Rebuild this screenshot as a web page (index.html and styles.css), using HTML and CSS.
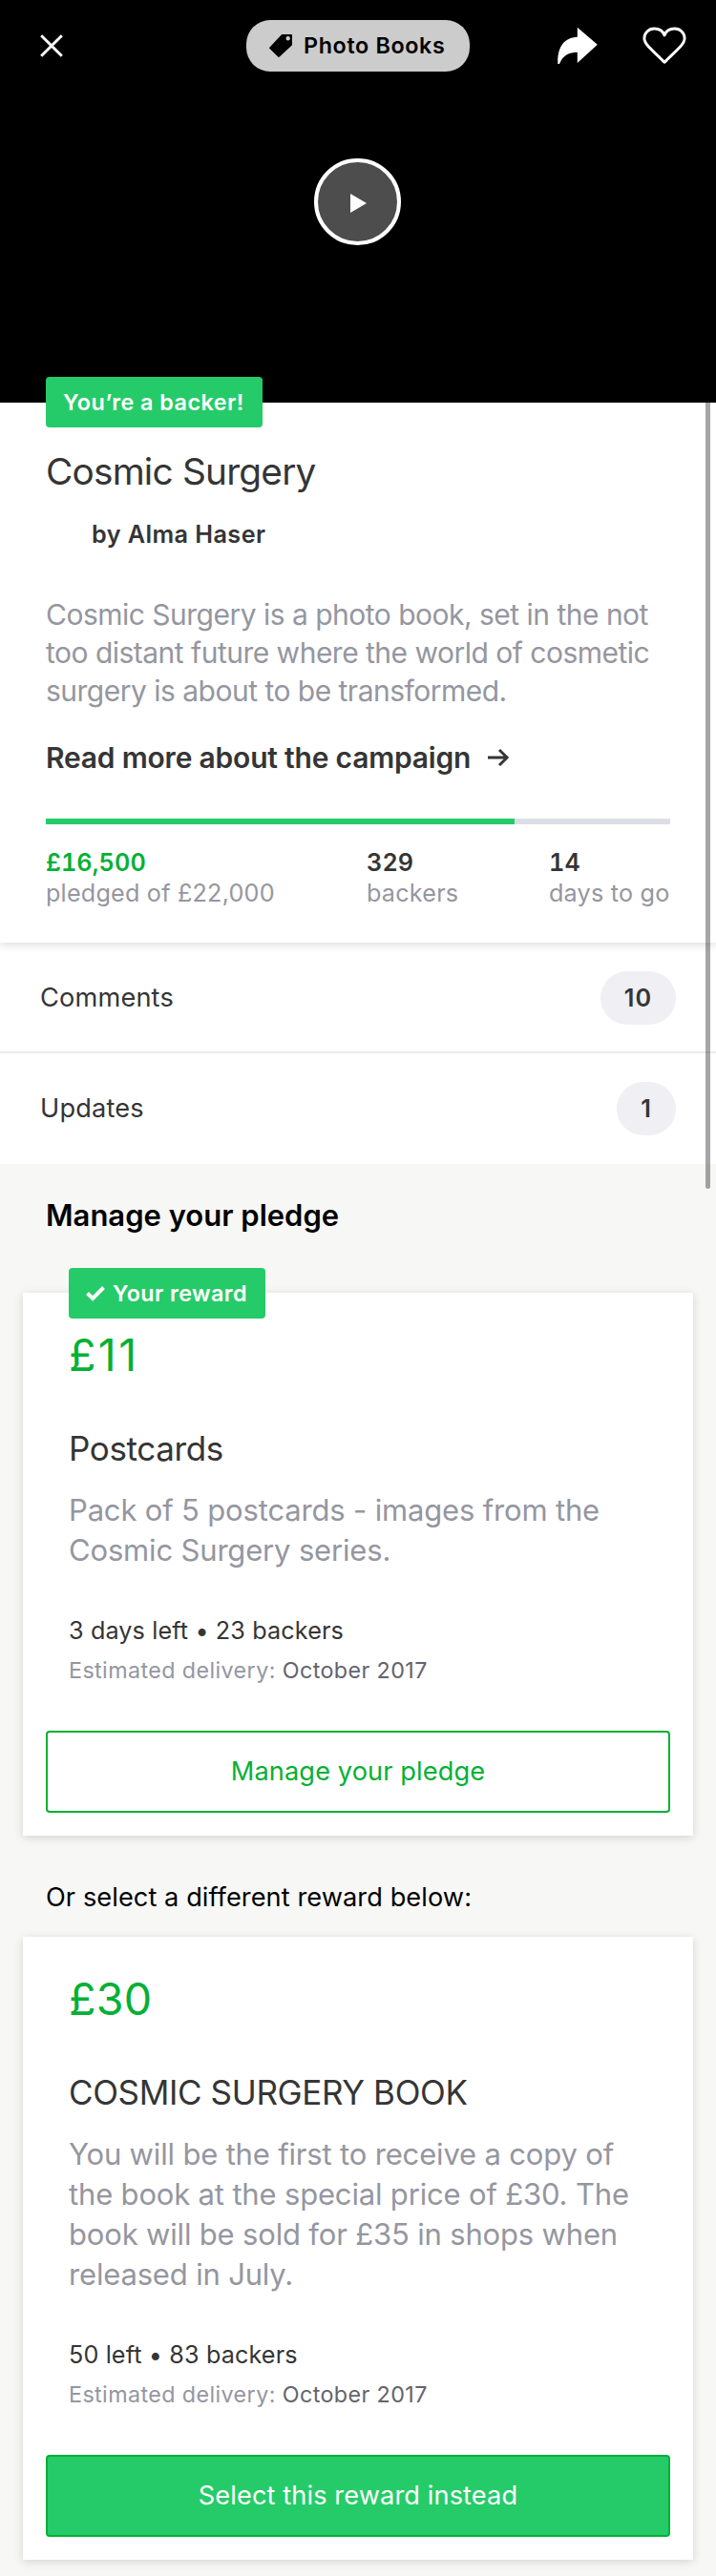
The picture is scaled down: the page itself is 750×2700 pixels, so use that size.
FILE: index.html
```
<!DOCTYPE html>
<html lang="en">
<head>
<meta charset="utf-8">
<title>Cosmic Surgery</title>
<link rel="stylesheet" href="styles.css">
</head>
<body>
<main class="screen">
  <header class="hero">
    <nav class="toolbar">
      <svg class="close" viewBox="0 0 24 24" aria-label="Close"><path d="M1.2 1.2 22.8 22.8M22.8 1.2 1.2 22.8" fill="none" stroke="#fff" stroke-width="2.9"/></svg>
      <div class="category">
        <svg class="tag" viewBox="0 0 24 24" aria-hidden="true"><path fill-rule="evenodd" d="M13.2 0H23Q24 0 24 1V11.2L10.8 23.5Q10 24.3 9.2 23.5L.5 15Q-.3 14.2.5 13.4ZM19.7 2.1a2.2 2.2 0 1 0 0 4.4 2.2 2.2 0 0 0 0-4.4Z"/></svg>
        <span>Photo Books</span>
      </div>
      <div class="actions">
        <svg class="share" viewBox="0 0 42 39" aria-label="Share"><path fill="#fff" d="M20.8.8 41.8 18.7 20.8 38V26.7C12 26.8 5.5 30 2 39H.3C-.3 22 6 11.5 20.8 10.7Z"/></svg>
        <svg class="heart" viewBox="0 0 46 40" aria-label="Save"><path fill="none" stroke="#fff" stroke-width="2.9" stroke-linejoin="round" d="M23 37.3C18.5 32.5 12 27 6.500 21C3.500 17.700 1.900 15.500 1.900 12.200C1.900 6.500 6.500 2 12.300 2C17.500 2 21.500 4.700 23 9C24.500 4.700 28.500 2 33.700 2C39.500 2 44.100 6.500 44.100 12.200C44.100 15.500 42.500 17.700 39.500 21C34 27 27.500 32.500 23 37.300Z"/></svg>
      </div>
    </nav>
    <div class="play"><svg viewBox="0 0 17 20" aria-label="Play"><path fill="#fff" d="M0 0 17 10 0 20Z"/></svg></div>
  </header>

  <section class="project">
    <div class="badge">You’re a backer!</div>
    <h1 class="title">Cosmic Surgery</h1>
    <p class="author">by Alma Haser</p>
    <p class="blurb">Cosmic Surgery is a photo book, set in the not<br>too distant future where the world of cosmetic<br>surgery is about to be transformed.</p>
    <div class="more">
      <span>Read more about the campaign</span>
      <svg class="arrow" viewBox="0 0 22 18" aria-hidden="true"><path fill="none" stroke="#353535" stroke-width="2.9" d="M0 9H20M12 1 20.2 9 12 17"/></svg>
    </div>
    <div class="progress"><div class="progress-fill" style="width:75%"></div></div>
    <div class="stats">
      <div><div class="stat-value pledged">£16,500</div><div class="stat-label">pledged of £22,000</div></div>
      <div><div class="stat-value">329</div><div class="stat-label">backers</div></div>
      <div><div class="stat-value">14</div><div class="stat-label">days to go</div></div>
    </div>
  </section>

  <section class="links">
    <div class="link first"><span>Comments</span><span class="count wide">10</span></div>
    <div class="link"><span>Updates</span><span class="count">1</span></div>
  </section>

  <section class="pledge">
    <h2 class="heading">Manage your pledge</h2>
    <article class="card">
      <div class="card-body">
        <div class="badge reward-badge">
          <svg class="check" viewBox="0 0 20 16" aria-hidden="true"><path fill="none" stroke="#fff" stroke-width="4" d="M1.5 7.5 7.2 13 18.5 1.5"/></svg>
          <span>Your reward</span>
        </div>
        <div class="price narrow">£11</div>
        <h3 class="reward">Postcards</h3>
        <p class="description">Pack of 5 postcards - images from the<br>Cosmic Surgery series.</p>
        <div class="availability">3 days left • 23 backers</div>
        <div class="delivery">Estimated delivery: <span class="date">October 2017</span></div>
      </div>
      <button class="button outline">Manage your pledge</button>
    </article>
    <p class="other">Or select a different reward below:</p>
    <article class="card spaced">
      <div class="card-body">
        <div class="price">£30</div>
        <h3 class="reward">COSMIC SURGERY BOOK</h3>
        <p class="description">You will be the first to receive a copy of<br>the book at the special price of £30. The<br>book will be sold for £35 in shops when<br>released in July.</p>
        <div class="availability">50 left • 83 backers</div>
        <div class="delivery">Estimated delivery: <span class="date">October 2017</span></div>
      </div>
      <button class="button solid">Select this reward instead</button>
    </article>
  </section>
  <div class="scrollbar"></div>
</main>
</body>
</html>
```
FILE: styles.css
```
* { box-sizing: border-box; }
body, h1, h2, h3, p { margin: 0; }
h1, h2, h3 { font-weight: 400; }
svg { display: block; flex: none; }

.screen {
  position: relative;
  width: 750px;
  height: 2700px;
  overflow: hidden;
  background: #f7f7f6;
  color: #353535;
  font-family: Inter, "Liberation Sans", sans-serif;
  white-space: nowrap;
}

/* Video header */
.hero { height: 422px; padding-top: 21px; background: #000; }
.toolbar {
  display: grid;
  grid-template-columns: 216px 234px 1fr;
  align-items: center;
  height: 54px;
  padding: 0 31px 0 42px;
}
.close { width: 24px; height: 24px; }
.category {
  display: flex;
  align-items: center;
  gap: 12px;
  height: 54px;
  padding-left: 24px;
  border-radius: 25px;
  background: #ccc;
  color: #000;
  font-size: 23.3px;
  font-weight: 600;
  line-height: 54px;
  letter-spacing: .65px;
}
.tag { width: 24px; height: 24px; }
.actions { display: flex; justify-content: flex-end; align-items: flex-start; gap: 47px; }
.share { width: 42px; height: 39px; }
.heart { width: 46px; height: 40px; }
.play {
  display: flex;
  align-items: center;
  width: 91px;
  height: 91px;
  margin: 91px 0 0 329px;
  padding-left: 34px;
  border: 4px solid #fff;
  border-radius: 50%;
  background: #4d4d4d;
}
.play svg { width: 17px; height: 20px; margin-top: 3px; }

/* Project summary */
.project {
  display: flex;
  flex-direction: column;
  position: relative;
  z-index: 1;
  height: 566px;
  padding: 0 48px;
  background: #fff;
  box-shadow: 0 2px 9px rgba(0, 0, 0, .15);
}
.badge {
  width: 227px;
  height: 53px;
  margin-top: -27px;
  padding-left: 18px;
  border-radius: 4px;
  background: #25cb68;
  color: #fff;
  font-size: 23.3px;
  font-weight: 600;
  line-height: 53px;
  letter-spacing: .48px;
}
.title { margin-top: 22px; font-size: 38.8px; line-height: 48px; letter-spacing: -.8px; }
.author { margin-top: 26px; padding-left: 48px; font-size: 25.2px; font-weight: 600; line-height: 32px; letter-spacing: .43px; }
.blurb { margin-top: 48px; color: #9596a0; font-size: 30px; line-height: 40px; letter-spacing: -.51px; }
.more { display: flex; align-items: center; gap: 18px; margin-top: 30px; font-size: 30px; font-weight: 600; line-height: 40px; letter-spacing: -.2px; }
.arrow { width: 22px; height: 18px; }
.progress { height: 6px; margin-top: 44px; background: #dcdee6; }
.progress-fill { height: 6px; background: #25cb68; }
.stats {
  display: grid;
  grid-template-columns: 336px 191px 1fr;
  margin-top: 24px;
  font-size: 25.2px;
  line-height: 32px;
  letter-spacing: .2px;
}
.stat-value { font-weight: 600; font-feature-settings: "tnum"; letter-spacing: .1px; }
.pledged { color: #05b035; }
.stat-label { color: #9596a0; }

/* Comments and updates */
.links { background: #fff; }
.link {
  display: flex;
  justify-content: space-between;
  align-items: center;
  height: 116px;
  padding: 0 42px;
  font-size: 27.2px;
  line-height: 32px;
  letter-spacing: .15px;
}
.first { border-bottom: 2px solid #ececee; padding-top: 2px; }
.count {
  width: 62px;
  height: 56px;
  border-radius: 28px;
  background: #efeff4;
  font-size: 25.2px;
  font-weight: 600;
  line-height: 56px;
  letter-spacing: 1px;
  text-align: center;
}
.wide { width: 79px; }

/* Rewards */
.pledge { padding: 34px 24px 0; }
.heading { padding-left: 24px; color: #000; font-size: 31px; font-weight: 600; line-height: 40px; }
.card {
  display: flex;
  flex-direction: column;
  margin-top: 61px;
  padding: 0 24px 24px;
  background: #fff;
  box-shadow: 0 2px 9px rgba(0, 0, 0, .15);
}
.spaced { margin-top: 23px; padding-top: 37px; }
.card-body { padding: 0 24px; }
.reward-badge { display: flex; align-items: center; gap: 8px; width: 206px; margin: -26px 0 10px; letter-spacing: .43px; }
.check { width: 20px; height: 16px; }
.price { color: #05b035; font-size: 46.6px; line-height: 56px; letter-spacing: .2px; }
.narrow { letter-spacing: 2.4px; }
.reward { margin-top: 48px; font-size: 35px; line-height: 44px; letter-spacing: -.37px; }
.description { margin-top: 22px; color: #9596a0; font-size: 31px; line-height: 42px; letter-spacing: -.17px; }
.availability { margin-top: 47px; font-size: 25.2px; line-height: 32px; letter-spacing: .12px; }
.delivery { margin-top: 11px; color: #9596a0; font-size: 23.3px; line-height: 30px; letter-spacing: .4px; }
.date { color: #63646c; }
.button {
  height: 86px;
  margin-top: 48px;
  padding: 0;
  border: 2px solid #05b035;
  border-radius: 4px;
  font-family: inherit;
  font-size: 27.2px;
  line-height: 82px;
  letter-spacing: .1px;
}
.outline { background: #fff; color: #05b035; }
.solid { background: #25cb68; color: #fff; }
.other { margin-top: 47px; padding-left: 24px; color: #000; font-size: 27.2px; line-height: 36px; letter-spacing: .07px; }

/* Scroll position indicator, drawn over the page */
.scrollbar {
  position: absolute;
  z-index: 2;
  top: 422px;
  right: 6px;
  width: 5px;
  height: 824px;
  border-radius: 0 0 3px 3px;
  background: rgba(0, 0, 0, .35);
}
```
